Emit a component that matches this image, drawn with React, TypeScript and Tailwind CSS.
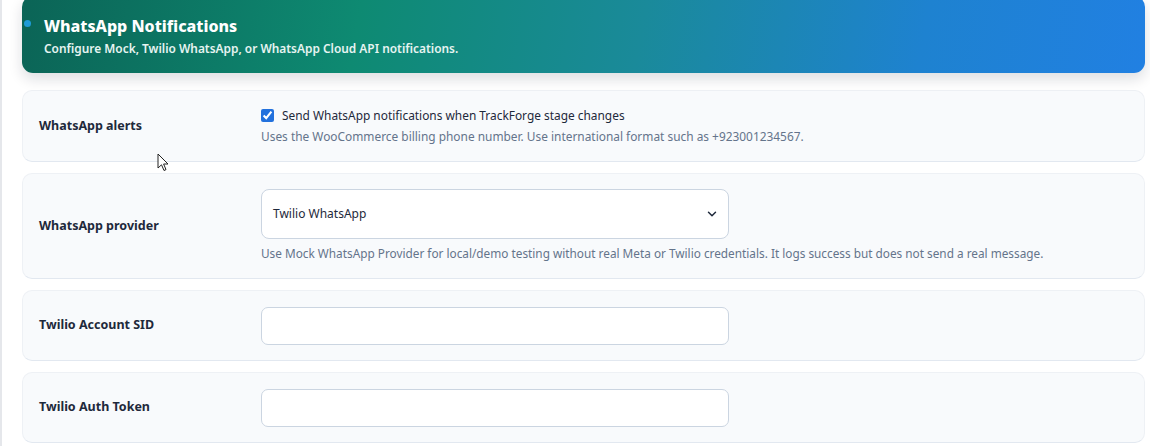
import { ChevronDown } from "lucide-react";

const font = { fontFamily: '"Noto Sans", "Open Sans", Arial, sans-serif' };

function Row({ label, children, className = "" }: { label: string; children: React.ReactNode; className?: string }) {
  return (
    <div
      className={`flex items-center rounded-[10px] border border-[#eef1f5] border-b-[#e2e8f0] bg-[#f8fafc] pl-[16px] ${className}`}
    >
      <div className="w-[222px] shrink-0 text-[12.5px] font-bold text-[#1e293b]">{label}</div>
      <div className="flex-1">{children}</div>
    </div>
  );
}

function TextInput() {
  return <input className="h-[38px] w-[468px] rounded-[7px] border border-[#cbd5e1] bg-white px-3 text-[13px] outline-none" />;
}

export default function App() {
  return (
    <div style={font} className="relative min-h-[446px] w-[1150px] overflow-hidden border-l-2 border-[#e5e7eb] bg-white">
      <div className="relative ml-[20px] mr-[5px] -mt-[4px] h-[77px] rounded-[11px] bg-[linear-gradient(100deg,#0b6456_0%,#0e8a72_30%,#1a8a9a_55%,#1e82d0_80%,#2180e2_100%)] pl-[22px] pt-[19px] shadow-[0_6px_14px_rgba(15,23,42,0.14)]">
        <span className="absolute left-[2px] top-[24px] h-[7px] w-[7px] rounded-full bg-[#1e9bd7]" />
        <h2 className="text-[16px] font-extrabold leading-[22px] text-white">WhatsApp Notifications</h2>
        <p className="mt-[3px] text-[11.9px] font-semibold leading-[16px] text-[#e6f4f1]">
          Configure Mock, Twilio WhatsApp, or WhatsApp Cloud API notifications.
        </p>
      </div>

      <div className="ml-[20px] mr-[5px] mt-[17px] flex flex-col gap-[11px]">
        <Row label="WhatsApp alerts" className="h-[72px]">
          <label className="flex items-center gap-[8px] text-[11.9px] text-[#1e293b]">
            <input type="checkbox" defaultChecked className="h-[13px] w-[13px] accent-[#2271dd]" />
            Send WhatsApp notifications when TrackForge stage changes
          </label>
          <p className="mt-[3px] text-[11.9px] text-[#64748b]">
            Uses the WooCommerce billing phone number. Use international format such as +923001234567.
          </p>
        </Row>

        <Row label="WhatsApp provider" className="h-[106px]">
          <div className="flex h-[50px] w-[468px] items-center justify-between rounded-[8px] border border-[#cbd5e1] bg-white pl-[11px] pr-[9px] text-[12px] text-[#1e293b]">
            <span>Twilio WhatsApp</span>
            <ChevronDown size={14} strokeWidth={2.5} className="text-[#1e293b]" />
          </div>
          <p className="mt-[6px] text-[11.8px] text-[#64748b]">
            Use Mock WhatsApp Provider for local/demo testing without real Meta or Twilio credentials. It logs success but does not send a real message.
          </p>
        </Row>

        <Row label="Twilio Account SID" className="h-[71px]">
          <TextInput />
        </Row>

        <Row label="Twilio Auth Token" className="h-[71px]">
          <TextInput />
        </Row>
      </div>

      <svg className="absolute left-[155px] top-[153px]" width="13" height="20" viewBox="0 0 13 20">
        <path d="M1 1 L1 15 L4.5 11.8 L7 17.5 L9 16.6 L6.6 11 L11 11 Z" fill="white" stroke="#222" strokeWidth="1" strokeLinejoin="round" />
      </svg>
    </div>
  );
}
